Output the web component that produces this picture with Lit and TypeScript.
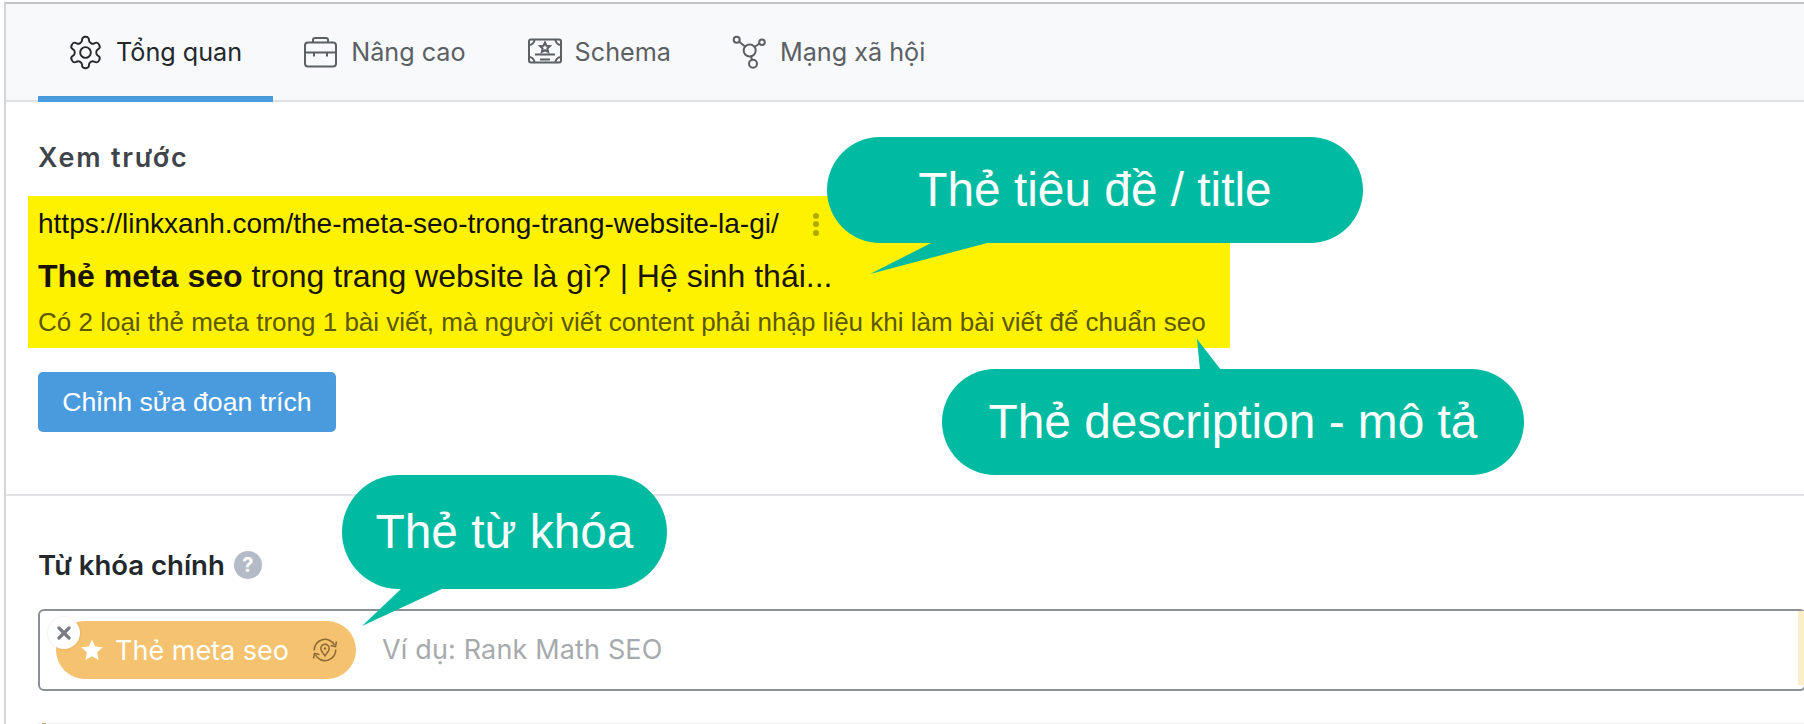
import { css, html, LitElement, svg } from "lit";
import { customElement } from "lit/decorators.js";

// tab icons share a 33x33 box
const GEAR = svg`<g transform="translate(-2.34 -2.34) scale(1.57)" stroke-width="1.2"><path d="M12.22 2h-.44a2 2 0 0 0-2 2v.18a2 2 0 0 1-1 1.73l-.43.25a2 2 0 0 1-2 0l-.15-.08a2 2 0 0 0-2.73.73l-.22.38a2 2 0 0 0 .73 2.73l.15.1a2 2 0 0 1 1 1.72v.51a2 2 0 0 1-1 1.74l-.15.09a2 2 0 0 0-.73 2.73l.22.38a2 2 0 0 0 2.73.73l.15-.08a2 2 0 0 1 2 0l.43.25a2 2 0 0 1 1 1.73V20a2 2 0 0 0 2 2h.44a2 2 0 0 0 2-2v-.18a2 2 0 0 1 1-1.73l.43-.25a2 2 0 0 1 2 0l.15.08a2 2 0 0 0 2.73-.73l.22-.39a2 2 0 0 0-.73-2.73l-.15-.08a2 2 0 0 1-1-1.74v-.5a2 2 0 0 1 1-1.74l.15-.09a2 2 0 0 0 .73-2.73l-.22-.38a2 2 0 0 0-2.73-.73l-.15.08a2 2 0 0 1-2 0l-.43-.25a2 2 0 0 1-1-1.73V4a2 2 0 0 0-2-2z"/><circle cx="12" cy="12" r="3.4"/></g>`;

const BRIEFCASE = svg`<rect x="1" y="6.5" width="31" height="24" rx="3"/><path d="M9 6.5V4a2 2 0 0 1 2-2h11a2 2 0 0 1 2 2v2.5"/><path d="M1 16.5h31M10 16.5v4M23 16.5v4"/>`;

const CERT = svg`<rect x="1" y="3.5" width="32" height="23" rx="2"/><path d="M1 9a5.5 5.5 0 0 0 5.5-5.5M27.5 3.5A5.5 5.5 0 0 0 33 9M1 21a5.5 5.5 0 0 1 5.5 5.5M33 21a5.5 5.5 0 0 0-5.5 5.5"/><path d="M17 6.5l1.5 3.2 3.4.4-2.500 2.300.7 3.400-3.100-1.700-3.100 1.700.7-3.400-2.500-2.300 3.400-.4zM7 18.500h20M12 23.500h10"/>`;

const NETWORK = svg`<circle cx="3.7" cy="3.8" r="3"/><circle cx="29" cy="6.2" r="2.8"/><circle cx="16.7" cy="14.5" r="6"/><circle cx="20" cy="27.8" r="4"/><path d="M6.2 5.8l5.8 4.7M26.5 7.5l-5 3.5M18 20.3l1 3.6"/>`;

const ORBIT = svg`<path d="M2.2 13.5A10.8 10.8 0 0 1 22.5 8M23.8 12.5A10.8 10.8 0 0 1 3.5 18"/><path d="M24.5 4.5l-1 5-5-1M1.5 21.5l1-5 5 1"/><path d="M13 7.3a4.2 4.2 0 0 1 4.2 4.2c0 2.5-2.7 4.8-4.2 7.5-1.500-2.700-4.200-5-4.200-7.500A4.200 4.200 0 0 1 13 7.300z"/><circle cx="13" cy="11.5" r="1.2" class="dot"/>`;

const TABS = [
  { label: "Tổng quan", icon: GEAR, active: true },
  { label: "Nâng cao", icon: BRIEFCASE, active: false },
  { label: "Schema", icon: CERT, active: false },
  { label: "Mạng xã hội", icon: NETWORK, active: false },
];

@customElement("app-root")
export class AppRoot extends LitElement {
  static styles = css`
    :host {
      display: block;
      position: relative;
      width: 1804px;
      height: 724px;
      overflow: hidden;
      background: #fff;
      font-family: Inter, "Noto Sans", sans-serif;
    }
    .panel {
      margin: 2px 0 0 4px;
      height: 722px;
      box-sizing: border-box;
      border-top: 2px solid #c3c4c7;
      border-left: 2px solid #d5d6d9;
    }

    /* --- Tabs --- */
    .tabs {
      display: flex;
      height: 98px;
      box-sizing: border-box;
      padding-left: 32px;
      background: #f8f9fa;
      border-bottom: 2px solid #dfe1e4;
    }
    .tab {
      display: flex;
      align-items: center;
      gap: 14px;
      height: 98px;
      box-sizing: border-box;
      padding: 4px 31px 0 31px;
      font-size: 25.2px;
      color: #5b6065;
      border-bottom: 6px solid transparent;
    }
    .tab.active {
      color: #23282d;
      border-bottom-color: #4a9ade;
    }
    .tab svg {
      flex: none;
      width: 33px;
      height: 33px;
      overflow: visible;
      fill: none;
      stroke: currentColor;
      stroke-width: 2;
    }

    /* --- Preview --- */
    .preview {
      height: 394px;
      box-sizing: border-box;
      border-bottom: 2px solid #e2e4e7;
      padding: 38px 0 0 32px;
    }
    .heading {
      font-size: 27px;
      line-height: 36px;
      font-weight: 600;
      letter-spacing: 1.8px;
      color: #3f444b;
    }
    .serp {
      width: 1202px;
      height: 152px;
      box-sizing: border-box;
      margin: 20px 0 24px -10px;
      padding: 9px 0 0 10px;
      background: #fff200;
      font-family: "Liberation Sans", Arial, sans-serif;
    }
    .url-row {
      display: flex;
      align-items: center;
      gap: 34px;
      height: 38px;
      font-size: 28px;
      color: #111;
    }
    .dots {
      display: flex;
      flex-direction: column;
      gap: 2.5px;
    }
    .dots i {
      width: 6px;
      height: 6px;
      border-radius: 50%;
      background: #b5a900;
    }
    .title {
      margin-top: 11px;
      font-size: 32px;
      line-height: 44px;
      color: #1a1400;
    }
    .title b {
      font-weight: 700;
    }
    .desc {
      margin-top: 4px;
      font-size: 26px;
      line-height: 40px;
      color: #5c5800;
    }
    .edit {
      display: flex;
      align-items: center;
      justify-content: center;
      width: 298px;
      height: 60px;
      box-sizing: border-box;
      padding-top: 1px;
      border-radius: 5px;
      background: #4a9ade;
      color: #fff;
      font-family: "Liberation Sans", Arial, sans-serif;
      font-size: 26.7px;
    }

    /* --- Keyword --- */
    .keyword {
      padding: 51px 0 0 32px;
    }
    .label {
      display: flex;
      align-items: center;
      gap: 9px;
      height: 36px;
      font-size: 27.5px;
      font-weight: 600;
      color: #23282d;
    }
    .help {
      display: flex;
      align-items: center;
      justify-content: center;
      width: 28px;
      height: 28px;
      border-radius: 50%;
      background: #b5bbc6;
      color: #fff;
      font-size: 20px;
      font-weight: 700;
    }
    .input {
      display: flex;
      width: 1768px;
      height: 82px;
      box-sizing: border-box;
      margin-top: 26px;
      padding-left: 16px;
      border: 2px solid #8c8f94;
      border-radius: 6px;
    }
    .pill {
      position: relative;
      display: flex;
      align-items: center;
      flex: none;
      width: 300px;
      height: 58px;
      box-sizing: border-box;
      margin-top: 10px;
      padding-left: 24px;
      border-radius: 29px;
      background: #f5c26f;
      color: #fff;
      font-size: 27px;
    }
    .pill .star {
      width: 24px;
      height: 24px;
      margin-right: 11px;
      fill: #fff;
    }
    .pill .orbit {
      position: absolute;
      right: 18px;
      top: 16px;
      width: 26px;
      height: 26px;
      fill: none;
      stroke: #8a6a35;
      stroke-width: 1.5;
    }
    .pill .orbit .dot {
      fill: #8a6a35;
      stroke: none;
    }
    .close {
      position: absolute;
      left: -8px;
      top: -4px;
      display: flex;
      align-items: center;
      justify-content: center;
      width: 32px;
      height: 32px;
      border-radius: 50%;
      background: #fff;
      box-shadow: 0 0 3px rgba(0, 0, 0, 0.12);
    }
    .close svg {
      width: 14px;
      height: 14px;
      stroke: #787c82;
      stroke-width: 3.2;
      stroke-linecap: round;
    }
    .placeholder {
      margin-left: 26px;
      line-height: 78px;
      font-size: 27px;
      letter-spacing: 0.15px;
      color: #a7aaad;
    }
    .strip {
      width: 6px;
      height: 74px;
      margin-left: auto;
      background: #fbeecb;
    }
    .next {
      position: relative;
      margin-top: 32px;
      height: 10px;
      border-top: 1px solid #f0f0f1;
    }
    .next::before {
      content: "";
      position: absolute;
      left: 4px;
      top: -1px;
      width: 4px;
      height: 1px;
      background: #c9ae78;
    }

    /* --- Annotation bubbles --- */
    .bubble {
      position: absolute;
      display: flex;
      align-items: center;
      justify-content: center;
      box-sizing: border-box;
      padding-bottom: 2px;
      background: #00bba1;
      color: #fff;
      font-family: "Liberation Sans", Arial, sans-serif;
      font-size: 47.8px;
    }
    .bubble svg {
      position: absolute;
      inset: 0;
      width: 100%;
      height: 100%;
      overflow: visible;
      fill: #00bba1;
    }
    .bubble span {
      position: relative;
    }
    .b-title {
      left: 827px;
      top: 137px;
      width: 536px;
      height: 106px;
      border-radius: 53px;
    }
    .b-desc {
      left: 942px;
      top: 369px;
      width: 582px;
      height: 106px;
      border-radius: 53px;
    }
    .b-key {
      left: 342px;
      top: 475px;
      width: 325px;
      height: 114px;
      border-radius: 57px;
    }
  `;

  private bubble(cls: string, text: string, tail: string) {
    return html`
      <div class="bubble ${cls}">
        <svg><polygon points=${tail}></polygon></svg>
        <span>${text}</span>
      </div>
    `;
  }

  render() {
    return html`
      <div class="panel">
        <div class="tabs">
          ${TABS.map(
            (t) => html`
              <div class="tab ${t.active ? "active" : ""}">
                <svg viewBox="0 0 33 33">${t.icon}</svg>${t.label}
              </div>
            `,
          )}
        </div>

        <div class="preview">
          <div class="heading">Xem trước</div>
          <div class="serp">
            <div class="url-row">
              <span>https://linkxanh.com/the-meta-seo-trong-trang-website-la-gi/</span>
              <span class="dots"><i></i><i></i><i></i></span>
            </div>
            <div class="title"><b>Thẻ meta seo</b> trong trang website là gì? | Hệ sinh thái...</div>
            <div class="desc">Có 2 loại thẻ meta trong 1 bài viết, mà người viết content phải nhập liệu khi làm bài viết để chuẩn seo</div>
          </div>
          <div class="edit">Chỉnh sửa đoạn trích</div>
        </div>

        <div class="keyword">
          <div class="label">Từ khóa chính <span class="help">?</span></div>
          <div class="input">
            <div class="pill">
              <span class="close">
                <svg viewBox="0 0 14 14"><path d="M2 2l10 10M12 2L2 12"></path></svg>
              </span>
              <svg class="star" viewBox="0 0 24 24">
                <path d="M12 1.5l3.2 7 7.3.8-5.4 5.1 1.5 7.6-6.6-3.8-6.6 3.8 1.5-7.6L1.5 9.3l7.3-.8z"></path>
              </svg>
              Thẻ meta seo
              <svg class="orbit" viewBox="0 0 26 26">${ORBIT}</svg>
            </div>
            <div class="placeholder">Ví dụ: Rank Math SEO</div>
            <div class="strip"></div>
          </div>
          <div class="next"></div>
        </div>
      </div>

      ${this.bubble("b-title", "Thẻ tiêu đề / title", "106,105 164,105 43,137")}
      ${this.bubble("b-desc", "Thẻ description - mô tả", "258,1 279,1 255,-30")}
      ${this.bubble("b-key", "Thẻ từ khóa", "60,113 102,113 20,151")}
    `;
  }
}
